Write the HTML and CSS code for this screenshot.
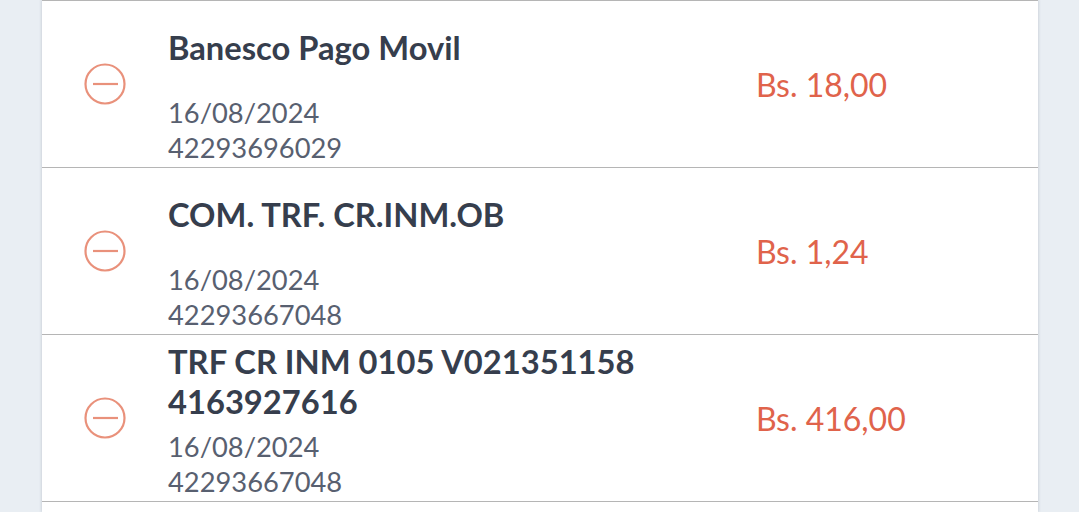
FILE: index.html
```html
<!DOCTYPE html>
<html lang="es">
<head>
<meta charset="utf-8">
<link rel="stylesheet" href="styles.css">
</head>
<body>
<div class="page">
  <div class="card">
    <div class="row">
      <div class="icon">
        <svg width="42" height="42" viewBox="0 0 42 42"><circle cx="21" cy="21" r="19.5" fill="none" stroke="#e9917b" stroke-width="2.2"/><line x1="9" y1="21" x2="34" y2="21" stroke="#e9917b" stroke-width="2.2"/></svg>
      </div>
      <div class="info">
        <div class="title-box"><div class="title">Banesco Pago Movil</div></div>
        <div class="meta">
          <div>16/08/2024</div>
          <div>42293696029</div>
        </div>
      </div>
      <div class="amount">Bs. 18,00</div>
    </div>
    <div class="row">
      <div class="icon">
        <svg width="42" height="42" viewBox="0 0 42 42"><circle cx="21" cy="21" r="19.5" fill="none" stroke="#e9917b" stroke-width="2.2"/><line x1="9" y1="21" x2="34" y2="21" stroke="#e9917b" stroke-width="2.2"/></svg>
      </div>
      <div class="info">
        <div class="title-box"><div class="title">COM. TRF. CR.INM.OB</div></div>
        <div class="meta">
          <div>16/08/2024</div>
          <div>42293667048</div>
        </div>
      </div>
      <div class="amount">Bs. 1,24</div>
    </div>
    <div class="row">
      <div class="icon">
        <svg width="42" height="42" viewBox="0 0 42 42"><circle cx="21" cy="21" r="19.5" fill="none" stroke="#e9917b" stroke-width="2.2"/><line x1="9" y1="21" x2="34" y2="21" stroke="#e9917b" stroke-width="2.2"/></svg>
      </div>
      <div class="info">
        <div class="title-box"><div class="title">TRF CR INM 0105 V021351158 4163927616</div></div>
        <div class="meta">
          <div>16/08/2024</div>
          <div>42293667048</div>
        </div>
      </div>
      <div class="amount">Bs. 416,00</div>
    </div>
    <div class="row"></div>
  </div>
</div>
</body>
</html>
```
FILE: styles.css
```css
html, body {
  margin: 0;
  padding: 0;
  background: #e9eef3;
  font-family: Lato, "Noto Sans", sans-serif;
}
.page {
  display: flex;
  justify-content: flex-start;
  padding-left: 42px;
  height: 512px;
  overflow: hidden;
}
.card {
  width: 996px;
  background: #ffffff;
  border-top: 1px solid #b5b5b5;
  box-shadow: 0 0 3px rgba(60, 70, 90, 0.25);
}
.row {
  display: flex;
  align-items: center;
  height: 166px;
  border-bottom: 1px solid #b5b5b5;
}
.icon {
  width: 42px;
  height: 42px;
  margin-left: 42px;
  margin-right: 42px;
  flex: none;
}
.icon svg { display: block; }
.info {
  align-self: stretch;
  width: 561px;
  display: flex;
  flex-direction: column;
  padding-bottom: 2px;
}
.title-box {
  flex: 1;
  display: flex;
  align-items: center;
}
.title {
  font-weight: 700;
  font-size: 32.7px;
  line-height: 40px;
  color: #363e4d;
}
.meta {
  font-size: 27.3px;
  line-height: 35px;
  color: #586070;
}
.amount {
  margin-left: 27px;
  font-size: 32px;
  color: #e0634b;
}
```
